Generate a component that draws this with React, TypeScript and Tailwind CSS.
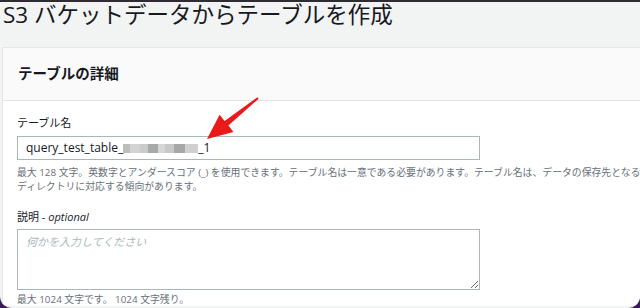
export default function App() {
  const blocks = [
    { w: 7, c: "bg-[#bdbdbd]" },
    { w: 10, c: "bg-[#d3d3d3]" },
    { w: 8, c: "bg-[#cbcbcb]" },
    { w: 10, c: "bg-[#a9a9a9]" },
    { w: 7, c: "bg-[#d6d6d6]" },
    { w: 9, c: "bg-[#c8c8c8]" },
    { w: 11, c: "bg-[#a7a7a7]" },
    { w: 13, c: "bg-[#d0d0d0]" },
  ];

  return (
    <div className="h-[308px] w-[640px] overflow-hidden bg-[#3b1d5e] font-['Open_Sans','Noto_Sans_CJK_JP',sans-serif]">
      <div className="relative h-full overflow-hidden rounded-b-[12px] bg-[#f2f3f3]">
        <div className="h-[2px] bg-[#2e2b33]" />
        <h1 className="pl-[3px] text-[22.5px] font-normal leading-[26px] text-[#16191f]">
          S3 バケットデータからテーブルを作成
        </h1>

        <section className="ml-[2px] mt-[19px] w-[700px] border-l border-t border-[#e4e7e7] bg-white">
          <div className="flex h-[53px] items-center border-b border-[#e4e7e7] bg-[#fafafa] pl-[15px]">
            <h2 className="text-[14.5px] font-bold leading-none text-[#16191f]">テーブルの詳細</h2>
          </div>

          <div className="pl-[14px] pt-[15px]">
            <label className="block text-[11px] leading-[14px] text-[#16191f]">テーブル名</label>
            <div className="mt-[6px] flex h-[24px] w-[463px] items-center border border-[#aab7b8] bg-white pl-[8px] text-[12px] text-[#16191f]">
              <span>query_test_table_</span>
              <span className="flex h-[9px]">
                {blocks.map((b, i) => (
                  <span key={i} className={`h-full ${b.c}`} style={{ width: b.w }} />
                ))}
              </span>
              <span>_1</span>
            </div>
            <p className="mt-[5px] text-[9.85px] leading-[14px] text-[#687078]">
              <span className="block whitespace-nowrap">
                最大 128 文字。英数字とアンダースコア (_) を使用できます。テーブル名は一意である必要があります。テーブル名は、データの保存先となる
              </span>
              <span className="block">ディレクトリに対応する傾向があります。</span>
            </p>

            <label className="mt-[17px] block text-[11px] leading-[14px] text-[#16191f]">
              説明 - <i>optional</i>
            </label>
            <textarea
              className="mt-[5px] block h-[61px] w-[463px] border border-[#aab7b8] bg-white px-[8px] py-[4px] text-[11px] outline-none placeholder:italic placeholder:text-[#aab7b8]"
              placeholder="何かを入力してください"
            />
            <p className="mt-[2px] text-[9.85px] leading-[14px] text-[#687078]">最大 1024 文字です。 1024 文字残り。</p>
          </div>
        </section>

        <svg className="pointer-events-none absolute left-0 top-0" width="640" height="308" viewBox="0 0 640 308">
          <polygon
            points="207,139 219.6,114.7 224.6,120.9 257.4,97.2 258.6,98.8 228.4,125.6 233.4,131.9"
            fill="#ea1a1a"
          />
        </svg>
      </div>
    </div>
  );
}
